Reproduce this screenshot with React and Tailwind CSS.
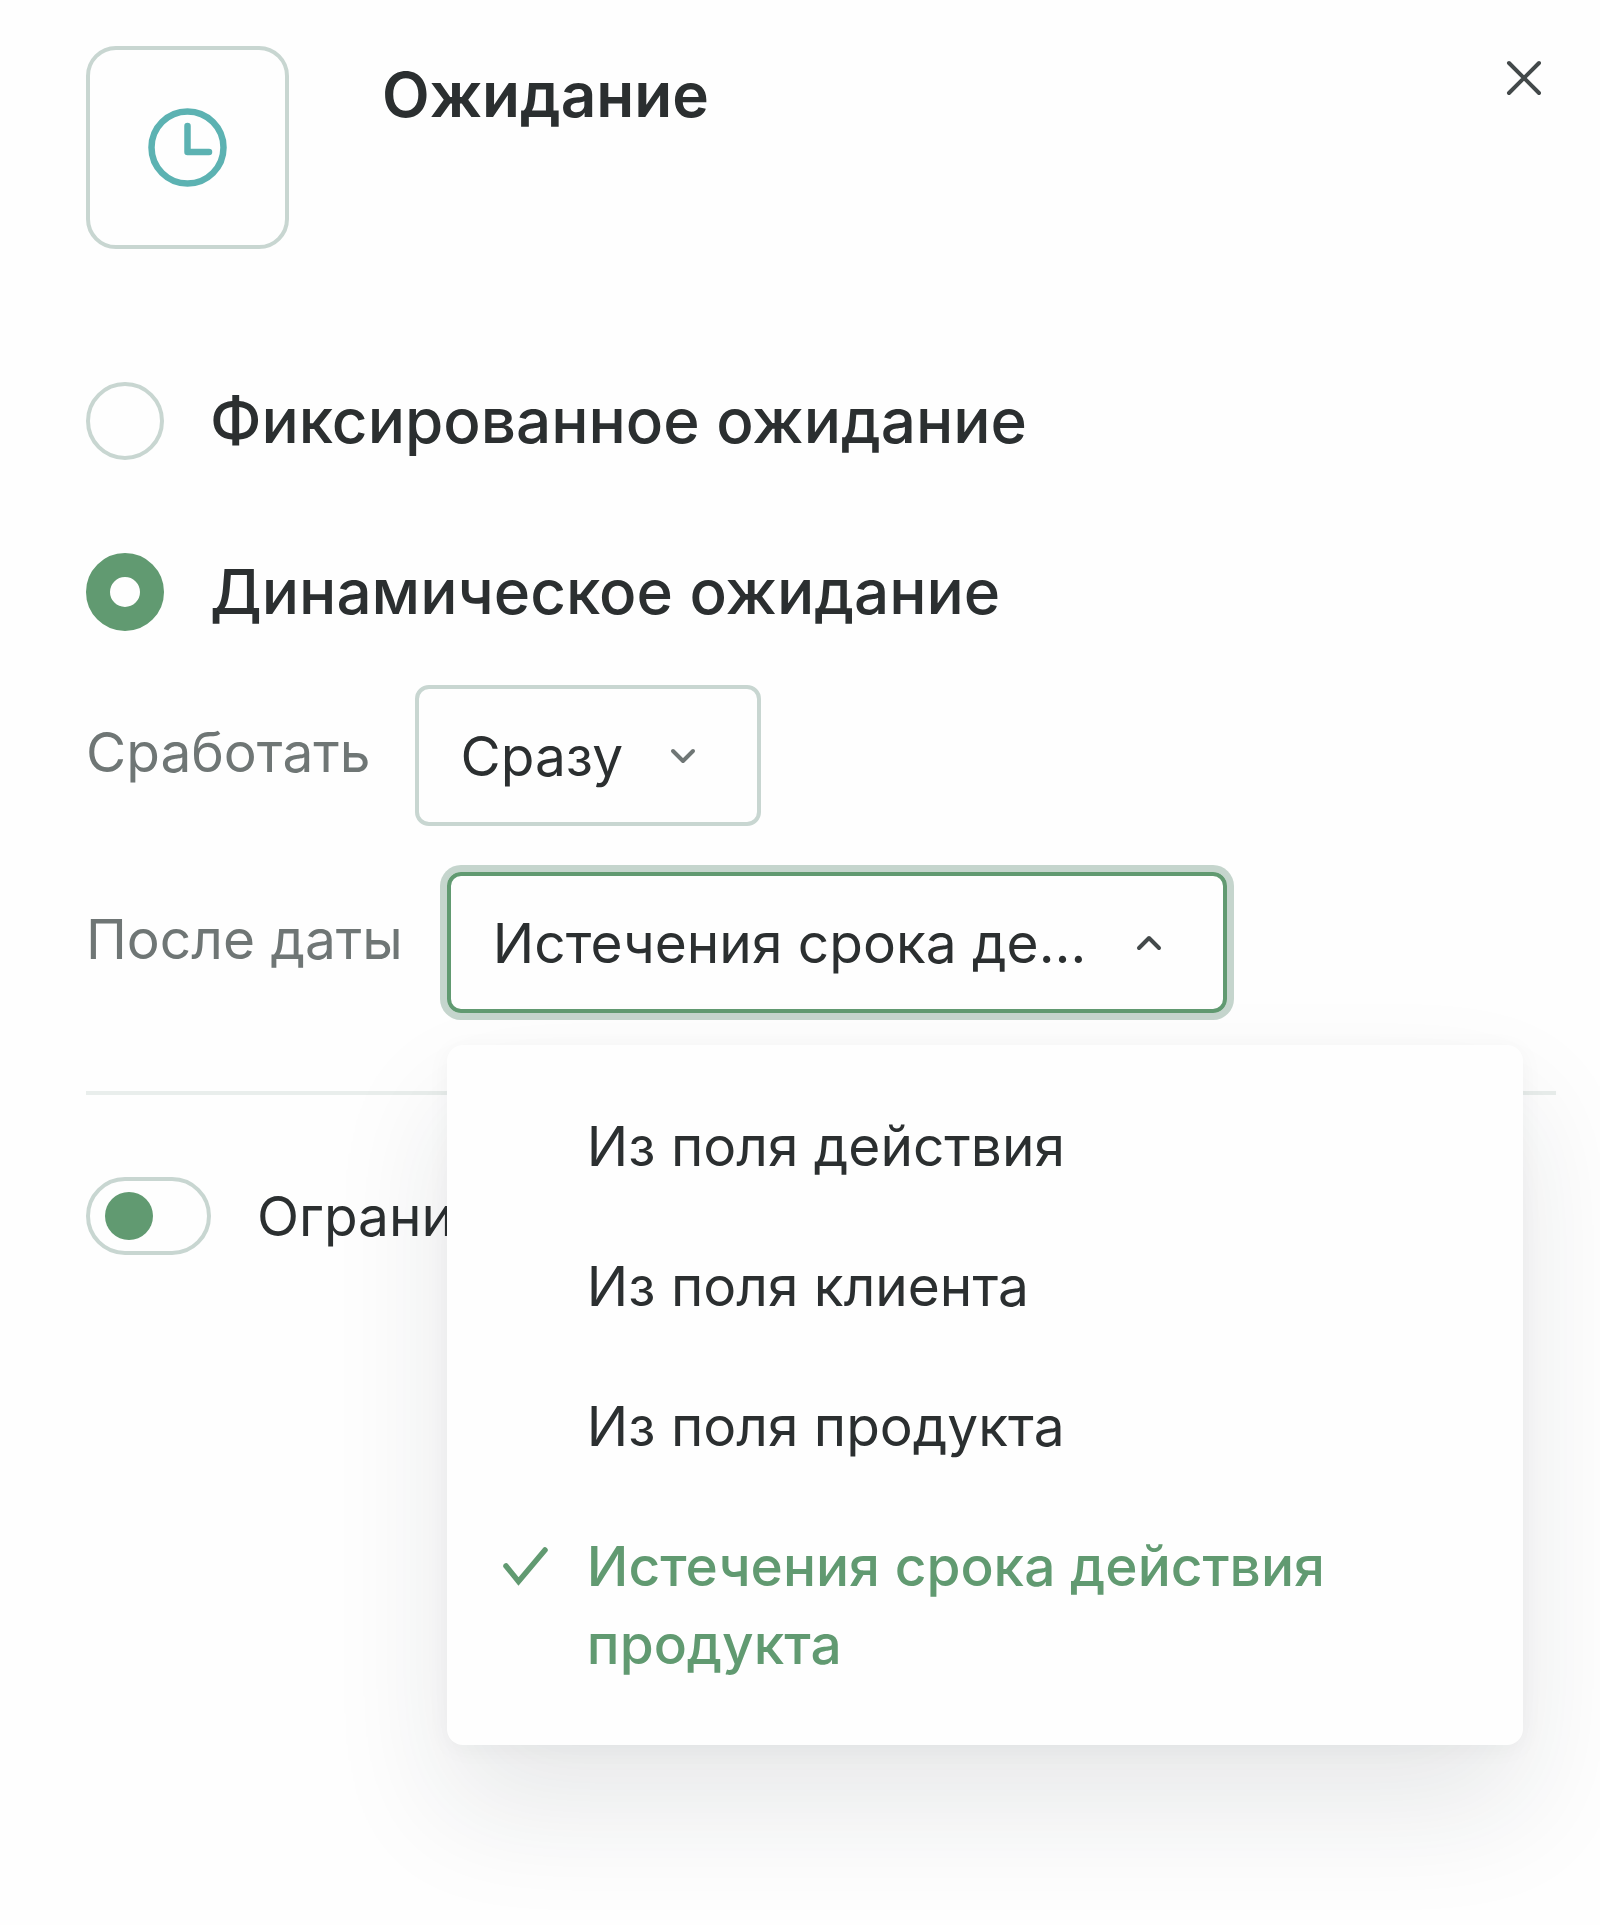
import { useState } from 'react'

const DATE_OPTIONS = [
  'Из поля действия',
  'Из поля клиента',
  'Из поля продукта',
  'Истечения срока действия продукта',
]

function ClockIcon() {
  return (
    <svg width="79" height="79" viewBox="0 0 79 79" fill="none" stroke="#5cb2b2" strokeWidth="6.5" strokeLinecap="round" strokeLinejoin="round" aria-hidden="true">
      <circle cx="39.5" cy="39.5" r="36" />
      <path d="M39.5 18V44H61" />
    </svg>
  )
}

function CloseIcon() {
  return (
    <svg width="36" height="36" viewBox="0 0 36 36" fill="none" stroke="#43494a" strokeWidth="4" strokeLinecap="round" aria-hidden="true">
      <path d="M3 3L33 33M33 3L3 33" />
    </svg>
  )
}

function Chevron({ up, className }) {
  return (
    <svg width="28" height="18" viewBox="0 0 28 18" fill="none" stroke="currentColor" strokeWidth="4" strokeLinecap="round" strokeLinejoin="round" className={className} aria-hidden="true">
      <path d={up ? 'M4 14L14 4L24 14' : 'M4 4L14 14L24 4'} />
    </svg>
  )
}

function CheckIcon() {
  return (
    <svg width="48" height="42" viewBox="0 0 48 42" fill="none" stroke="currentColor" strokeWidth="5.5" strokeLinecap="round" aria-hidden="true">
      <path d="M5 21L17.5 36.5L44 5" />
    </svg>
  )
}

function RadioRow({ id, label, checked, onChange }) {
  return (
    <div className="flex items-center gap-[46px]">
      <input
        type="radio"
        id={id}
        name="wait"
        checked={checked}
        onChange={onChange}
        className="size-[78px] shrink-0 appearance-none rounded-full border-4 border-[#c8d6d1] checked:border-24 checked:border-[#619a71]"
      />
      <label htmlFor={id} className="text-[62px] leading-[78px] font-medium">{label}</label>
    </div>
  )
}

function App() {
  const [mode, setMode] = useState('dynamic')
  const [moment, setMoment] = useState('Сразу')
  const [date, setDate] = useState(DATE_OPTIONS[3])
  const [open, setOpen] = useState(true)
  const [limited, setLimited] = useState(false)

  return (
    <main className="min-h-screen overflow-hidden bg-[#fefefe] pt-[46px] pr-11 pb-20 pl-[86px] font-['Inter','Noto_Sans',sans-serif] text-[55px] leading-[78px] text-[#2b2f30]">
      <header className="flex items-start">
        <div className="flex size-[203px] shrink-0 items-center justify-center rounded-[30px] border-4 border-[#c8d6d1]">
          <ClockIcon />
        </div>
        <h1 className="mt-[10px] ml-[93px] flex-1 text-[62px] leading-[78px] font-semibold">Ожидание</h1>
        <button type="button" aria-label="Закрыть" className="flex size-16 items-center justify-center">
          <CloseIcon />
        </button>
      </header>

      <div className="mt-[133px] flex flex-col gap-[93px]">
        <RadioRow id="fixed" label="Фиксированное ожидание" checked={mode === 'fixed'} onChange={() => setMode('fixed')} />
        <RadioRow id="dynamic" label="Динамическое ожидание" checked={mode === 'dynamic'} onChange={() => setMode('dynamic')} />
      </div>

      <div className="mt-[54px] flex items-center gap-11">
        <label htmlFor="moment" className="pb-2 text-[#6f7675]">Сработать</label>
        <div className="relative">
          <select
            id="moment"
            value={moment}
            onChange={(e) => setMoment(e.target.value)}
            className="h-[141px] w-[346px] appearance-none rounded-[14px] border-4 border-[#c8d6d1] pr-[120px] pl-[42px]"
          >
            <option>Сразу</option>
          </select>
          <Chevron className="pointer-events-none absolute top-[62px] right-16 text-[#6f7675]" />
        </div>
      </div>

      <div className="mt-[46px] flex items-center gap-11">
        <label htmlFor="date" className="pb-2 text-[#6f7675]">После даты</label>
        <div className="relative">
          <select
            id="date"
            value={date}
            onChange={(e) => setDate(e.target.value)}
            onMouseDown={(e) => {
              e.preventDefault()
              setOpen(!open)
            }}
            className="h-[141px] w-[780px] appearance-none rounded-[14px] border-4 border-[#619a71] pr-[120px] pl-[42px] text-ellipsis ring-7 ring-[#c5d5cd]"
          >
            {DATE_OPTIONS.map((option) => (
              <option key={option}>{option}</option>
            ))}
          </select>
          <Chevron up={open} className="pointer-events-none absolute top-[62px] right-16 text-[#43494a]" />

          {/* Выпадающий список */}
          {open && (
            <ul
              role="listbox"
              aria-label="После даты"
              className="absolute top-full left-0 z-10 mt-8 w-[1076px] rounded-2xl bg-[#fefefe] py-[31px] shadow-[0_4px_24px_rgba(30,40,45,0.04),0_62px_120px_rgba(30,40,50,0.1)]"
            >
              {DATE_OPTIONS.map((option) => (
                <li key={option} role="option" aria-selected={option === date}>
                  <button
                    type="button"
                    onClick={() => {
                      setDate(option)
                      setOpen(false)
                    }}
                    className={
                      option === date
                        ? 'flex w-full items-start py-[31px] pr-20 pl-[54px] text-left font-medium text-[#619a71]'
                        : 'flex w-full items-start py-[31px] pr-20 pl-[54px] text-left'
                    }
                  >
                    <span className="flex h-[78px] w-[86px] shrink-0 items-center">
                      {option === date && <CheckIcon />}
                    </span>
                    <span>{option}</span>
                  </button>
                </li>
              ))}
            </ul>
          )}
        </div>
      </div>

      <hr className="mt-[78px] border-t-4 border-[#e9eeec]" />

      <div className="mt-[82px] flex items-center gap-[46px]">
        <input
          type="checkbox"
          role="switch"
          id="limit"
          checked={limited}
          onChange={(e) => setLimited(e.target.checked)}
          className="flex h-[78px] w-[125px] shrink-0 appearance-none items-center rounded-full border-4 border-[#c8d6d1] px-[15px] before:size-12 before:rounded-full before:bg-[#619a71] checked:justify-end"
        />
        <label htmlFor="limit">Ограничить</label>
      </div>
    </main>
  )
}

export default App
